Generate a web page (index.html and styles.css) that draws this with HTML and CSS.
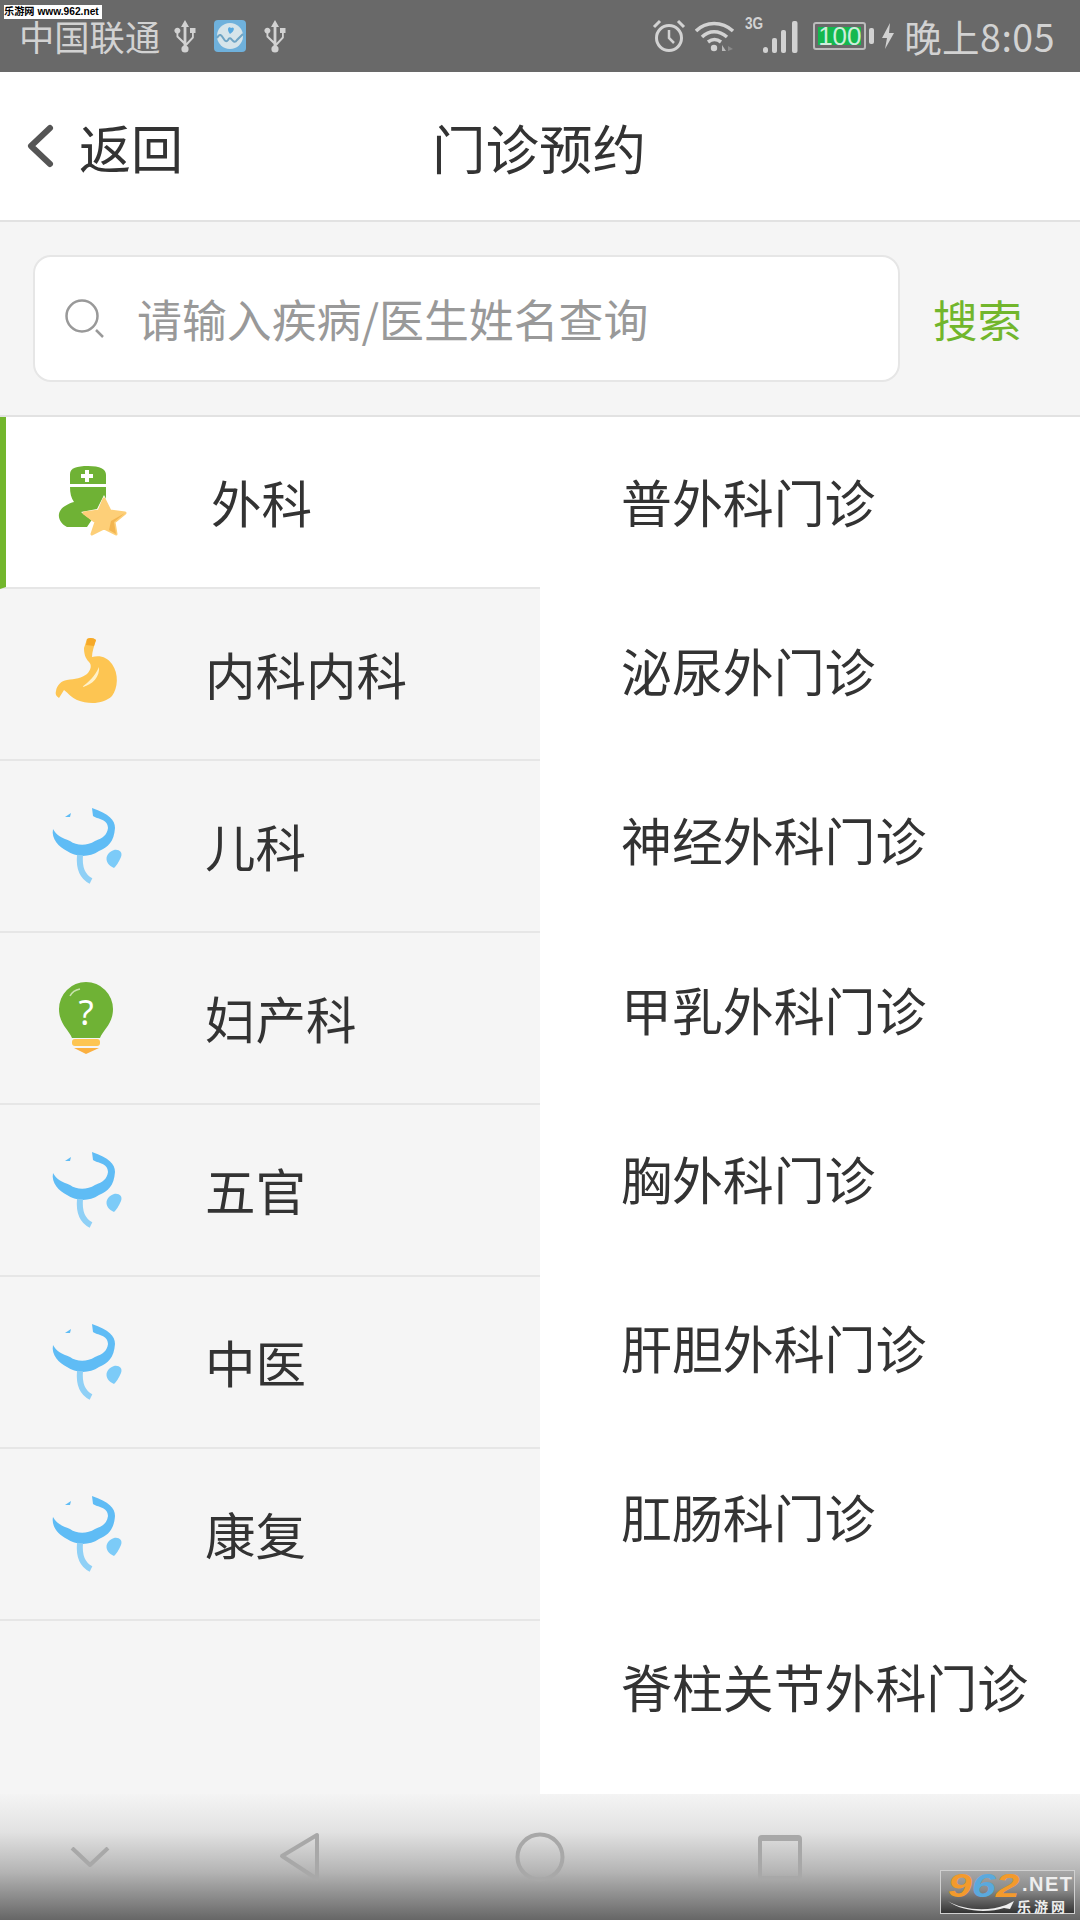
FILE: index.html
```html
<!DOCTYPE html>
<html lang="zh-CN">
<head>
  <meta charset="UTF-8">
  <meta name="viewport" content="width=device-width, initial-scale=1.0">
  <title>门诊预约</title>
  <link rel="stylesheet" href="styles.css">
</head>
<body>
  <svg class="defs" width="0" height="0">
    <symbol id="usb" viewBox="0 0 24 34">
      <path d="M12 1 L16 8 H13.4 V24 L19 18 V14 H17 V9 H22.500 V14 H20.800 V19 L13.400 27 V29 H10.600 V25 L3.500 18 V14.500 A3 3 0 1 1 5.300 14.500 V17 L10.600 22 V8 H8 Z"/>
      <circle cx="12" cy="30" r="3.600"/>
    </symbol>
    <symbol id="scope" viewBox="0 0 80 80">
      <path class="scope-band" d="M6 23 C4 33 12 41 20 45 C28 51 42 52 52 45 C61 41 67 36 68 22 C68 14 62 8 45 2 L46 10 C50 13 61 13 61 22 C60 29 56 32 48 35 C40 40 30 40 23 35 C15 32 9 29 6 23 Z"/>
      <path class="scope-stem" d="M33 49 C32 60 34 70 44 75"/>
      <path class="scope-band" d="M18 11 L24 7 L23 11 Z"/>
      <path class="scope-drop" d="M67 44 C72 43 76 46 74 51 C72 56 69 60 67 62 C62 60 58 55 60 50 C61 47 64 45 67 44 Z"/>
    </symbol>
  </svg>

  <div class="status-bar">
    <div class="status-left">
      <span class="carrier">中国联通</span>
      <svg class="usb-icon"><use href="#usb"/></svg>
      <svg class="app-icon" viewBox="0 0 32 32">
        <rect width="32" height="32" rx="4" fill="#6fb1dc"/>
        <circle cx="16" cy="16" r="13" fill="#d6e4ea"/>
        <path d="M3 18 C8 8 10 26 14 20 C17 14 19 26 23 20 L29 14" fill="none" stroke="#6fa4c4" stroke-width="2"/>
        <path d="M16 14 C12 9 15 6 17 8 C20 6 22 10 16 14 Z" fill="#58a9e0"/>
      </svg>
      <svg class="usb-icon usb-second"><use href="#usb"/></svg>
    </div>
    <div class="status-right">
      <svg class="alarm-icon" viewBox="0 0 34 34" fill="none" stroke="#d2d2d2">
        <circle cx="17" cy="19" r="12.500" stroke-width="3"/>
        <path d="M17 11 V19 L22 24" stroke-width="2.500"/>
        <path d="M2 8 L8 2 M26 2 L32 8" stroke-width="3"/>
      </svg>
      <svg class="wifi-icon" viewBox="0 0 40 32" fill="none" stroke="#d2d2d2" stroke-width="3.500">
        <path d="M1 11 C11 1 27 1 38 11"/>
        <path d="M7 17 C14 10 24 10 32 17"/>
        <path d="M13 22 C17 19 22 19 26 22"/>
        <circle cx="19" cy="28" r="3.200" fill="#d2d2d2" stroke="none"/>
        <path d="M27 31 V25 L31 31 Z" fill="#bbb" stroke="none"/>
        <path d="M33 31 V26 L38 29 Z" fill="#8a8a8a" stroke="none"/>
      </svg>
      <div class="signal">
        <span class="net-type">3G</span>
        <svg class="signal-icon" viewBox="0 0 35 34" fill="#d2d2d2">
          <rect x="0" y="27" width="5" height="6" rx="2.500"/>
          <rect x="9" y="18" width="5" height="15" rx="2"/>
          <rect x="18" y="10" width="5" height="23" rx="2"/>
          <rect x="29" y="1" width="5.500" height="32" rx="2"/>
        </svg>
      </div>
      <div class="battery"><span class="battery-level">100</span></div>
      <span class="battery-nub"></span>
      <svg class="bolt-icon" viewBox="0 0 12 26"><path d="M8 0 L0 15 H5 L3 26 L12 10 H7 Z" fill="#d2d2d2"/></svg>
      <span class="clock">晚上8:05</span>
    </div>
    <div class="site-tag">乐游网 www.962.net</div>
  </div>

  <div class="header">
    <div class="back">
      <svg class="back-icon" viewBox="0 0 30 46"><path d="M25 5 L6 23 L25 41" fill="none" stroke="#555" stroke-width="6" stroke-linecap="round" stroke-linejoin="round"/></svg>
      <span>返回</span>
    </div>
    <div class="title">门诊预约</div>
  </div>

  <div class="search-bar">
    <div class="search-box">
      <svg class="search-icon" viewBox="0 0 40 40" fill="none" stroke="#999" stroke-width="2.500">
        <circle cx="18" cy="17" r="15.500"/>
        <path d="M32 31 L39 38"/>
      </svg>
      <span class="search-hint">请输入疾病/医生姓名查询</span>
    </div>
    <span class="search-btn">搜索</span>
  </div>

  <div class="main">
    <div class="sidebar">
      <div class="dept active">
        <svg class="dept-icon" viewBox="0 0 80 80">
          <path d="M17 12 C17 6 24 4 35 4 C47 4 53 7 53 13 V22 H17 Z" fill="#6fb235"/>
          <path d="M32 8 H36 V12 H40 V16 H36 V20 H32 V16 H28 V12 H32 Z" fill="#fff"/>
          <path d="M17 25 H53 V34 C53 42 47 46 44 50 L34 65 H14 C9 63 5 57 6 52 C7 46 14 42 21 40 C18 36 17 31 17 25 Z" fill="#6fb235"/>
          <path d="M51 33 L58 47 L74 50 L62 60 L64 75 L51 68 L38 75 L41 60 L28 50 L44 47 Z" fill="#fff"/>
          <path d="M51 37 L57 49 L72 51 L61 60 L63 72 L51 66 L39 72 L43 60 L31 51 L46 49 Z" fill="#fdcf78" stroke="#fdcf78" stroke-width="3" stroke-linejoin="round"/>
          <path d="M72 51 L61 60 L63 72 L56 68 L58 59 Z" fill="#f3b550"/>
        </svg>
        <span>外科</span>
      </div>
      <div class="dept">
        <svg class="dept-icon" viewBox="0 0 80 80">
          <path d="M40 5 C43 3 47 4 49 6 C47 12 45 18 45 23 C53 21 60 23 65 30 C72 40 71 54 65 62 C57 70 42 71 30 66 C25 64 21 59 17 56 L12 64 C9 62 8 60 9 57 C10 51 14 47 20 46 C28 45 35 44 40 40 C44 36 45 31 42 28 C38 24 37 19 37 14 Z" fill="#fdc552"/>
          <path d="M40 5 C43 3 47 4 49 6 L47 12 L39 11 Z" fill="#f6a928"/>
          <path d="M52 33 C53 42 46 51 35 53 C42 48 48 42 52 33 Z" fill="#fff1c9"/>
        </svg>
        <span>内科内科</span>
      </div>
      <div class="dept">
        <svg class="dept-icon"><use href="#scope"/></svg>
        <span>儿科</span>
      </div>
      <div class="dept">
        <svg class="dept-icon" viewBox="0 0 80 80">
          <path d="M25 60 C22 52 12 46 12 31 A27 27 0 0 1 66 31 C66 46 56 52 53 60 Z" fill="#6fb235"/>
          <path d="M23 18 C25 14 28 12 33 11" fill="none" stroke="#c9e3ae" stroke-width="1.500"/>
          <text class="bulb-mark" x="39" y="47">?</text>
          <rect x="25" y="61" width="28" height="7" rx="3" fill="#fdc552"/>
          <path d="M27 70 H52 L39 76 Z" fill="#fbb040"/>
        </svg>
        <span>妇产科</span>
      </div>
      <div class="dept">
        <svg class="dept-icon"><use href="#scope"/></svg>
        <span>五官</span>
      </div>
      <div class="dept">
        <svg class="dept-icon"><use href="#scope"/></svg>
        <span>中医</span>
      </div>
      <div class="dept">
        <svg class="dept-icon"><use href="#scope"/></svg>
        <span>康复</span>
      </div>
    </div>
    <div class="clinics">
      <div class="clinic">普外科门诊</div>
      <div class="clinic">泌尿外门诊</div>
      <div class="clinic">神经外科门诊</div>
      <div class="clinic">甲乳外科门诊</div>
      <div class="clinic">胸外科门诊</div>
      <div class="clinic">肝胆外科门诊</div>
      <div class="clinic">肛肠科门诊</div>
      <div class="clinic">脊柱关节外科门诊</div>
    </div>
  </div>

  <div class="nav-bar">
    <svg class="nav-icon nav-down" viewBox="0 0 40 20"><path d="M2 1 L20 18 L38 1"/></svg>
    <svg class="nav-icon nav-back" viewBox="0 0 42 50"><path d="M38 3 V47 L3 24 Z"/></svg>
    <svg class="nav-icon nav-home" viewBox="0 0 50 50"><circle cx="25" cy="25" r="22.500"/></svg>
    <svg class="nav-icon nav-apps" viewBox="0 0 44 46">
      <rect x="2" y="3" width="40" height="41" rx="2"/>
      <path d="M2 5 H42"/>
    </svg>
    <div class="logo-tag">
      <div class="logo-top">
        <span class="logo-digits"><span class="logo-orange">9</span><span class="logo-blue">6</span><span class="logo-orange">2</span></span>
        <span class="logo-net">.NET</span>
      </div>
      <div class="logo-bottom">
        <svg class="logo-swoosh" viewBox="0 0 66 12"><path d="M0 1 C14 10 40 12 58 5 L66 1 L62 9 L56 8 C40 13 14 12 0 1 Z" fill="#eee"/></svg>
        <span class="logo-cn">乐游网</span>
      </div>
    </div>
  </div>
</body>
</html>
```

FILE: styles.css
```css
* {
  margin: 0;
  padding: 0;
  box-sizing: border-box;
}
body {
  width: 1080px;
  height: 1920px;
  display: flex;
  flex-direction: column;
  overflow: hidden;
  background-color: #f5f5f5;
  color: #333;
  font-family: "Noto Sans CJK SC", "Noto Sans", sans-serif;
}
.defs {
  position: absolute;
}

/* status bar */
.status-bar {
  position: relative;
  height: 72px;
  flex: none;
  display: flex;
  justify-content: space-between;
  align-items: center;
  background-color: #696969;
  color: #d2d2d2;
  fill: #d2d2d2;
}
.status-left {
  display: flex;
  align-items: center;
  padding-left: 19px;
}
.carrier {
  font-size: 35.300px;
  line-height: 34px;
}
.usb-icon {
  width: 24px;
  height: 34px;
  margin-left: 13px;
}
.usb-second {
  margin-left: 17px;
}
.app-icon {
  width: 32px;
  height: 32px;
  margin-left: 17px;
}
.status-right {
  display: flex;
  align-items: center;
  padding-right: 25px;
}
.alarm-icon {
  width: 34px;
  height: 34px;
}
.wifi-icon {
  width: 40px;
  height: 32px;
  margin-left: 9px;
}
.signal {
  position: relative;
  width: 53px;
  height: 36px;
  margin-left: 10px;
}
.net-type {
  position: absolute;
  top: -3px;
  left: 0;
  font-family: "Liberation Sans", sans-serif;
  font-size: 17px;
  font-weight: 700;
  line-height: 18px;
  transform: scaleX(.8);
  transform-origin: left;
}
.signal-icon {
  position: absolute;
  right: 0;
  bottom: 0;
  width: 35px;
  height: 34px;
}
.battery {
  width: 53px;
  height: 28px;
  margin-left: 15px;
  padding: 3px;
  border: 2px solid #bcbcbc;
  border-radius: 3px;
}
.battery-level {
  display: block;
  height: 100%;
  background-color: #14b84e;
  color: #cdeedb;
  font-family: "Liberation Sans", sans-serif;
  font-size: 26px;
  line-height: 19px;
  text-align: center;
}
.battery-nub {
  width: 5px;
  height: 16px;
  margin-left: 3px;
  background-color: #d2d2d2;
  border-radius: 2px;
}
.bolt-icon {
  width: 12px;
  height: 26px;
  margin-left: 8px;
}
.clock {
  margin-left: 10px;
  font-size: 37.500px;
  line-height: 72px;
  letter-spacing: .5px;
}
.site-tag {
  position: absolute;
  top: 5px;
  left: 4px;
  width: 98px;
  height: 14px;
  background-color: #fff;
  color: #000;
  font-family: "Liberation Sans", "Noto Sans CJK SC", sans-serif;
  font-size: 10.200px;
  font-weight: 700;
  line-height: 14px;
  white-space: nowrap;
  overflow: hidden;
}

/* header */
.header {
  position: relative;
  height: 150px;
  flex: none;
  display: flex;
  align-items: center;
  background-color: #fff;
  border-bottom: 2px solid #e2e2e2;
}
.back {
  display: flex;
  align-items: center;
  padding-left: 25px;
  font-size: 52px;
}
.back-icon {
  width: 30px;
  height: 46px;
  margin-right: 24px;
}
.title {
  position: absolute;
  left: 0;
  right: 0;
  text-align: center;
  padding-right: 2px;
  font-size: 53.500px;
}

/* search */
.search-bar {
  height: 195px;
  flex: none;
  display: flex;
  align-items: center;
  padding-left: 33px;
  border-bottom: 2px solid #e2e2e2;
}
.search-box {
  width: 867px;
  height: 127px;
  display: flex;
  align-items: center;
  padding-left: 29px;
  background-color: #fff;
  border: 2px solid #e6e6e6;
  border-radius: 18px;
}
.search-icon {
  width: 40px;
  height: 40px;
}
.search-hint {
  margin-left: 33px;
  color: #999;
  font-size: 44.900px;
}
.search-btn {
  margin-left: 33px;
  color: #72b62c;
  font-size: 44.500px;
}

/* department list */
.main {
  flex: 1;
  display: flex;
  min-height: 0;
}
.sidebar {
  width: 540px;
  flex: none;
}
.dept {
  height: 172px;
  display: flex;
  align-items: center;
  padding: 0 0 2px 47px;
  border-bottom: 2px solid #e6e6e6;
  font-size: 50.500px;
}
.dept.active {
  background-color: #fff;
  border-left: 6px solid #72b62c;
}
.dept-icon {
  width: 80px;
  height: 80px;
  margin: 2px 78px 0 0;
  flex: none;
}
.scope-band {
  fill: #5fbcf5;
}
.scope-stem {
  fill: none;
  stroke: #8fd0f6;
  stroke-width: 6;
}
.scope-drop {
  fill: #7ccbf8;
}
.bulb-mark {
  fill: #fff;
  font-family: "Noto Sans", sans-serif;
  font-size: 35px;
  text-anchor: middle;
}

/* clinic list */
.clinics {
  flex: 1;
  background-color: #fff;
}
.clinic {
  height: 169.300px;
  display: flex;
  align-items: center;
  padding: 0 0 2px 621px;
  margin-left: -540px;
  font-size: 50.900px;
}

/* bottom navigation */
.nav-bar {
  position: relative;
  height: 126px;
  flex: none;
  display: grid;
  grid-template-columns: 180px 240px 240px 240px;
  justify-items: center;
  align-items: center;
  background: linear-gradient(#f4f4f4 0, #e2e2e2 30%, #b4b4b4 62%, #666 100%);
}
.nav-icon {
  fill: none;
  stroke: #a8a8a8;
  stroke-width: 4;
  stroke-linejoin: round;
}
.nav-down {
  width: 40px;
  height: 20px;
}
.nav-back {
  width: 42px;
  height: 50px;
}
.nav-home {
  width: 50px;
  height: 50px;
}
.nav-apps {
  width: 44px;
  height: 46px;
}
.logo-tag {
  position: absolute;
  right: 5px;
  bottom: 6px;
  width: 135px;
  height: 44px;
  padding-left: 7px;
  background: linear-gradient(#a8a8a8, #8a8a8a 45%, #333);
  border: 1px solid #d0d0d0;
  color: #eee;
  font-family: "Liberation Sans", sans-serif;
}
.logo-top {
  height: 28px;
  display: flex;
  white-space: nowrap;
}
.logo-digits {
  width: 74px;
  flex: none;
  font-size: 34px;
  font-weight: 700;
  font-style: italic;
  line-height: 28px;
  transform: scaleX(1.26);
  transform-origin: left;
}
.logo-orange {
  color: #f39a2c;
}
.logo-blue {
  color: #5aa9dd;
}
.logo-net {
  font-size: 20px;
  font-weight: 700;
  letter-spacing: 1.500px;
  line-height: 26px;
}
.logo-bottom {
  height: 14px;
  display: flex;
  align-items: center;
}
.logo-swoosh {
  width: 66px;
  height: 12px;
  flex: none;
}
.logo-cn {
  margin-left: 3px;
  font-family: "Noto Sans CJK SC", sans-serif;
  font-size: 14px;
  font-weight: 700;
  letter-spacing: 3px;
  line-height: 14px;
}
```
